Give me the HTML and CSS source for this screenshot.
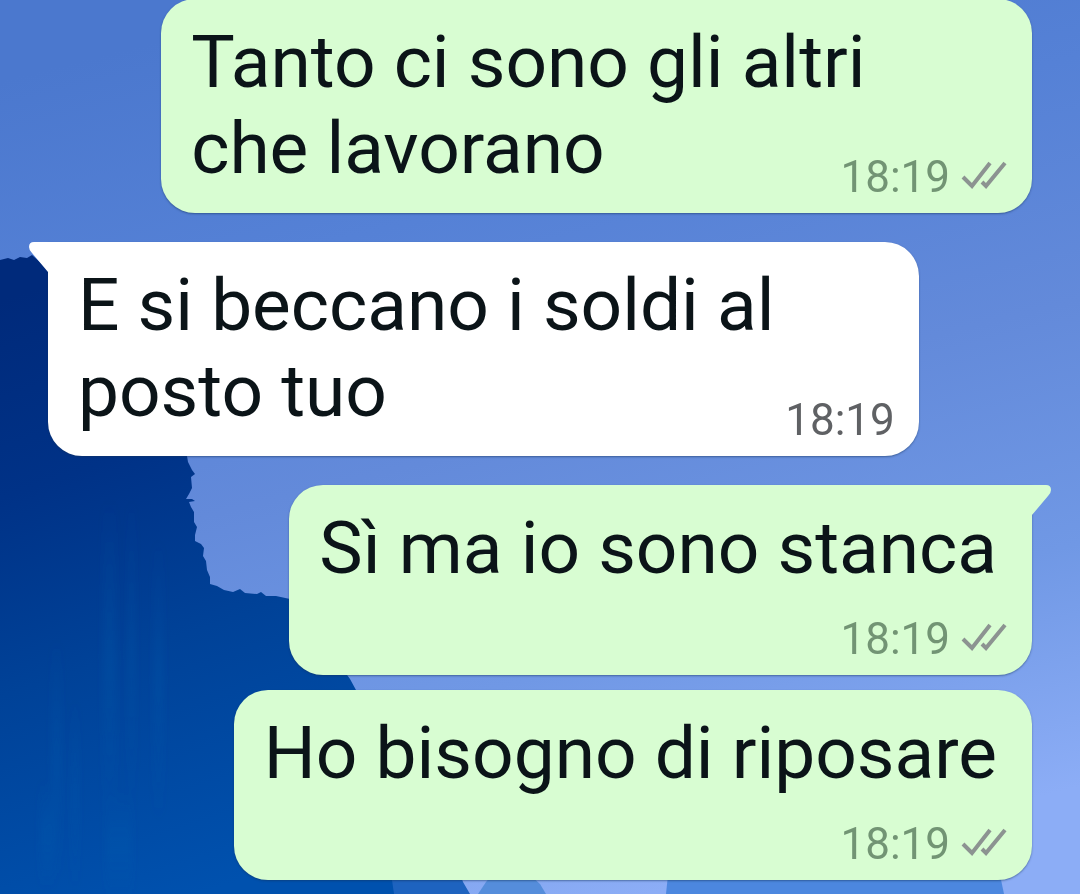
FILE: index.html
```html
<!DOCTYPE html>
<html lang="it">
<head>
    <meta charset="UTF-8">
    <meta name="viewport" content="width=device-width, initial-scale=1.0">
    <title>Chat</title>
    <link rel="stylesheet" href="styles.css">
</head>
<body>
    <!-- wallpaper, plus the shapes shared by the bubbles -->
    <svg class="wallpaper" viewBox="0 0 1080 894" preserveAspectRatio="none" aria-hidden="true">
        <defs>
            <linearGradient id="sky" x1="0.3" y1="0" x2="0.6" y2="1">
                <stop offset="0" stop-color="#4b78ce"/>
                <stop offset="0.25" stop-color="#5581d6"/>
                <stop offset="0.5" stop-color="#638ada"/>
                <stop offset="0.75" stop-color="#7098e5"/>
                <stop offset="1" stop-color="#8cadf6"/>
            </linearGradient>
            <linearGradient id="cliff" gradientUnits="userSpaceOnUse" x1="0" y1="300" x2="200" y2="894">
                <stop offset="0" stop-color="#002a7b"/>
                <stop offset="0.3" stop-color="#003287"/>
                <stop offset="0.6" stop-color="#004298"/>
                <stop offset="1" stop-color="#0051ae"/>
            </linearGradient>
            <linearGradient id="streak" x1="0" y1="0" x2="0" y2="1">
                <stop offset="0" stop-color="#1260b0" stop-opacity="0"/>
                <stop offset="0.5" stop-color="#1260b0" stop-opacity="0.22"/>
                <stop offset="1" stop-color="#1260b0" stop-opacity="0"/>
            </linearGradient>
            <filter id="soft"><feGaussianBlur stdDeviation="3"/></filter>
            <symbol id="ticks" viewBox="0 0 48 32">
                <path d="M3 16l9 9L30 2M22 21l4 4L45 2"/>
            </symbol>
            <symbol id="tail" viewBox="0 0 22 34">
                <path d="M22 0H6Q1 0 1 5Q1 8 4 11L20 30L22 34z"/>
            </symbol>
        </defs>
        <rect width="1080" height="894" fill="url(#sky)"/>
        <!-- far hills -->
        <path fill="#1158b5" d="M340 860H385L391 885L396 894H340z"/>
        <path fill="#1e63bf" d="M385 860H455L463 882L470 894H394z"/>
        <path fill="#558ddb" d="M478 894L486 882L492 875H530L540 884L546 894z"/>
        <path fill="#4c87df" d="M666 894L668 875H1000L1004 894z"/>
        <!-- cliff -->
        <path fill="url(#cliff)" d="M0 260L8 258L14 260L20 257L27 258L32 255L60 280L150 400L187 456L188 462L192 470L195 474L191 477L192 488L189 494L186 499L192 499L195 501L189 502L191 507L194 512L194 522L197 527L195 535L195 541L201 544L204 548L203 556L206 561L207 570L210 577L210 584L217 586L224 590L233 592L240 589L245 593L257 594L261 592L266 596L276 596L290 599L310 620L342 668L350 679L356 690L375 790L392 880L394 894H0z"/>
        <g fill="url(#streak)" filter="url(#soft)">
            <rect x="103" y="500" width="13" height="320"/>
            <rect x="128" y="500" width="7" height="300"/>
            <rect x="154" y="540" width="9" height="280"/>
            <rect x="52" y="640" width="9" height="240"/>
            <rect x="72" y="700" width="6" height="190"/>
            <rect x="106" y="790" width="26" height="110"/>
            <rect x="40" y="780" width="14" height="110"/>
        </g>
    </svg>

    <main class="chat">
        <article class="bubble bubble--out bubble--wide">
            <p class="bubble__text">Tanto ci sono gli altri<br>che lavorano</p>
            <div class="bubble__meta">
                <time datetime="18:19">18:19</time>
                <svg class="ticks" role="img" aria-label="Consegnato"><use href="#ticks"/></svg>
            </div>
        </article>

        <article class="bubble bubble--in bubble--wide bubble--first">
            <svg class="tail" aria-hidden="true"><use href="#tail"/></svg>
            <p class="bubble__text">E si beccano i soldi al<br>posto tuo</p>
            <div class="bubble__meta">
                <time datetime="18:19">18:19</time>
            </div>
        </article>

        <article class="bubble bubble--out bubble--first">
            <svg class="tail" aria-hidden="true"><use href="#tail"/></svg>
            <p class="bubble__text">Sì ma io sono stanca</p>
            <div class="bubble__meta">
                <time datetime="18:19">18:19</time>
                <svg class="ticks" role="img" aria-label="Consegnato"><use href="#ticks"/></svg>
            </div>
        </article>

        <article class="bubble bubble--out">
            <p class="bubble__text">Ho bisogno di riposare</p>
            <div class="bubble__meta">
                <time datetime="18:19">18:19</time>
                <svg class="ticks" role="img" aria-label="Consegnato"><use href="#ticks"/></svg>
            </div>
        </article>
    </main>
</body>
</html>
```

FILE: styles.css
```css
* {
    margin: 0;
    padding: 0;
    box-sizing: border-box;
}

body {
    min-height: 100vh;
    background: #6289d9;
    font-family: Roboto, "Liberation Sans", sans-serif;
    color: #0b1418;
}

.wallpaper {
    position: fixed;
    top: 0;
    left: 0;
    width: 100%;
    height: 100%;
    z-index: -1;
}

/* the list is scrolled slightly past its first bubble */
.chat {
    display: flex;
    flex-direction: column;
    gap: 15px;
    margin-top: -1px;
    padding: 0 48px;
}

.bubble {
    position: relative;
    display: flex;
    flex-direction: column;
    padding: 20px 24px 10px 30px;
    border-radius: 34px;
    box-shadow: 0 1px 2px rgba(20, 50, 90, 0.5);
}

.bubble--out {
    align-self: flex-end;
    background: #d8fdd2;
    fill: #d8fdd2;
}

.bubble--in {
    align-self: flex-start;
    background: #fff;
    fill: #fff;
}

.bubble--wide {
    width: 88.5%;
}

.bubble--first {
    margin-top: 14px;
}

.bubble--out.bubble--first {
    border-top-right-radius: 0;
}

.bubble--in.bubble--first {
    border-top-left-radius: 0;
}

.bubble__text {
    padding-right: 11px;
    font-size: 73px;
    line-height: 86px;
}

.bubble__meta {
    display: flex;
    justify-content: flex-end;
    align-items: center;
    gap: 10px;
    margin-top: 22px;
    font-size: 44px;
    line-height: 52px;
    color: #729474;
}

.bubble--in .bubble__meta {
    color: #5f6164;
}

/* the last line is short, so the time sits next to it */
.bubble--wide .bubble__meta {
    margin-top: -40px;
}

.ticks {
    width: 48px;
    height: 32px;
    fill: none;
    stroke: #8c9391;
    stroke-width: 4;
}

.tail {
    position: absolute;
    top: 0;
    left: -20px;
    width: 22px;
    height: 34px;
}

.bubble--out .tail {
    left: auto;
    right: -20px;
    transform: scaleX(-1);
}
```
